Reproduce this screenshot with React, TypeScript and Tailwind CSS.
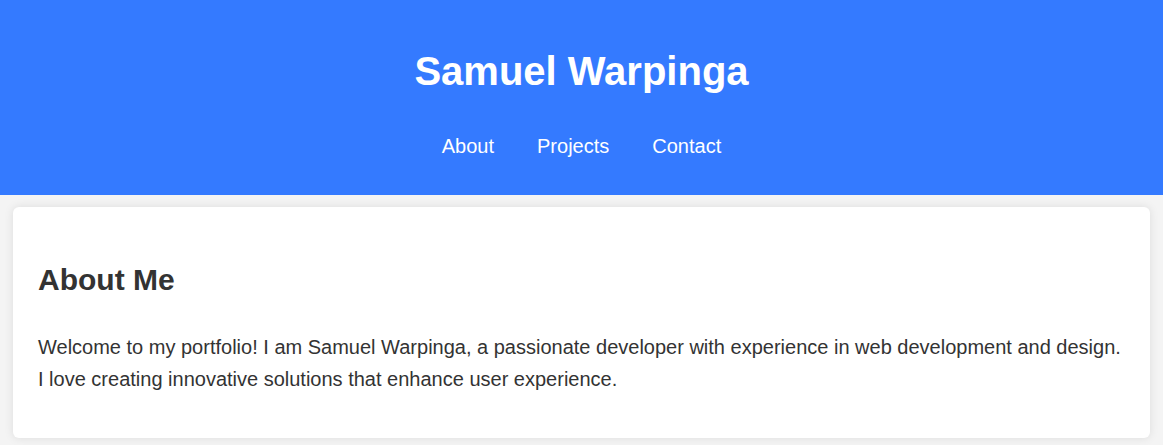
export default function App() {
  return (
    <div className="min-h-[445px] bg-[#f4f4f4] text-[#333333] font-['Liberation_Sans',Arial,sans-serif] overflow-hidden">
      <header className="h-[195px] bg-[#347aff] text-white flex flex-col items-center">
        <h1 className="mt-[48px] text-[40px] leading-[46px] font-bold">Samuel Warpinga</h1>
        <nav className="mt-[41px] flex gap-[43px] text-[20px] leading-[23px]">
          <a>About</a>
          <a>Projects</a>
          <a>Contact</a>
        </nav>
      </header>
      <main className="px-[13px] pt-[12px]">
        <section className="bg-white rounded-[6px] shadow-[0_0_10px_rgba(0,0,0,0.1)] px-[25px] pt-[25px] pb-[43px]">
          <h2 className="mt-[31px] text-[30px] leading-[34px] font-bold">About Me</h2>
          <p className="mt-[34px] text-[20px] leading-[32px]">
            Welcome to my portfolio! I am Samuel Warpinga, a passionate developer with experience in web development and design. I love creating innovative solutions that enhance user experience.
          </p>
        </section>
      </main>
    </div>
  );
}
